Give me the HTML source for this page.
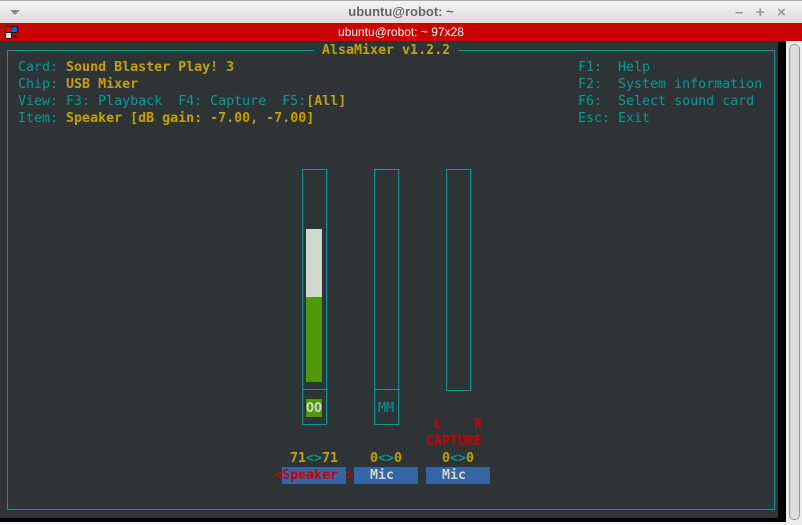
<!DOCTYPE html><html><head><style>
*{margin:0;padding:0;box-sizing:border-box}
body{width:802px;height:525px;background:#f2f2f2;position:relative;overflow:hidden;font-family:"DejaVu Sans Mono","Liberation Mono",monospace;font-size:13.3px}
.a{position:absolute;white-space:pre;line-height:17px}
.t{color:#06989a}.y{color:#c4a000;font-weight:bold}.r{color:#cc0000}
.b{position:absolute;border:1.5px solid #06989a}
</style></head><body>
<div class="a" style="left:0;top:0;width:802px;height:23px;background:linear-gradient(#f4f4f4,#dcdcdc);border-top:1px solid #aaa"></div>
<div class="a" style="left:10px;top:10px;width:0;height:0;border-left:5px solid transparent;border-right:5px solid transparent;border-top:5px solid #888"></div>
<div class="a" style="left:0;top:3px;width:802px;text-align:center;font-family:'Liberation Sans',sans-serif;font-size:13px;font-weight:bold;color:#666">ubuntu@robot: ~</div>
<div class="a" style="left:735px;top:4px;color:#999;font-family:'Liberation Sans',sans-serif;font-size:15px;font-weight:bold">–&nbsp;&nbsp;&nbsp;+&nbsp;&nbsp;&nbsp;×</div>
<div class="a" style="left:0;top:23px;width:802px;height:18px;background:#c80000"></div>
<div class="a" style="left:0;top:24px;width:802px;text-align:center;font-family:'Liberation Sans',sans-serif;font-size:12px;color:#fff;line-height:16px">ubuntu@robot: ~ 97x28</div>
<svg style="position:absolute;left:4px;top:25px" width="15" height="15"><rect x="1.5" y="1.5" width="6" height="6" fill="#e00" stroke="#111" stroke-width="1"/><rect x="7.5" y="1.5" width="6" height="6" fill="#06c" stroke="#111" stroke-width="1"/><rect x="1.5" y="7.5" width="6" height="6" fill="#ddd" stroke="#111" stroke-width="1"/><path d="M8 10h6l-3 3z" fill="#400"/></svg>
<div class="a" style="left:0;top:41px;width:786px;height:481px;background:#000"></div>
<div class="a" style="left:0;top:41px;width:778px;height:477px;background:#2e3436"></div>
<div class="a" style="left:786px;top:41px;width:16px;height:484px;background:#eee"></div>
<div class="a" style="left:789px;top:44px;width:11px;height:476px;border:1px solid #999;border-radius:5px;background:#ddd"></div>
<div class="a" style="left:7px;top:50px;width:768px;height:460px;border:1px solid #06989a"></div>
<div class="a y" style="left:314px;top:42px;background:#2e3436;padding:0 8px">AlsaMixer v1.2.2</div>
<div class="a" style="left:18px;top:59px;line-height:17px"><span class="t">Card: </span><span class="y">Sound Blaster Play! 3</span>
<span class="t">Chip: </span><span class="y">USB Mixer</span>
<span class="t">View: F3: Playback  F4: Capture  F5:</span><span class="y">[All]</span>
<span class="t">Item: </span><span class="y">Speaker [dB gain: -7.00, -7.00]</span></div>
<div class="a t" style="left:578px;top:59px">F1:  Help
F2:  System information
F6:  Select sound card
Esc: Exit</div>
<div class="b" style="left:302px;top:169px;width:25px;height:256px"></div>
<div class="b" style="left:302px;top:389px;width:25px;height:2px;border-width:1.5px 0 0 0"></div>
<div class="a" style="left:306px;top:229px;width:16px;height:68px;background:#d3d7cf"></div>
<div class="a" style="left:306px;top:297px;width:16px;height:85px;background:#4e9a06"></div>
<div class="a" style="left:306px;top:399px;width:16px;height:18px;background:#4e9a06"></div>
<div class="a" style="left:306px;top:400px;color:#d3d7cf;font-weight:bold">OO</div>
<div class="b" style="left:374px;top:169px;width:25px;height:256px"></div>
<div class="b" style="left:374px;top:389px;width:25px;height:2px;border-width:1.5px 0 0 0"></div>
<div class="a t" style="left:378px;top:400px">MM</div>
<div class="b" style="left:446px;top:169px;width:25px;height:222px"></div>
<div class="a r" style="left:434px;top:416px;font-weight:bold">L    R</div>
<div class="a r" style="left:426px;top:433px;font-weight:bold">CAPTURE</div>
<div class="a" style="left:290px;top:450px;font-weight:bold"><span style="color:#c4a000">71</span><span class="t">&lt;&gt;</span><span style="color:#c4a000">71</span></div>
<div class="a" style="left:370px;top:450px;font-weight:bold"><span style="color:#c4a000">0</span><span class="t">&lt;&gt;</span><span style="color:#c4a000">0</span></div>
<div class="a" style="left:442px;top:450px;font-weight:bold"><span style="color:#c4a000">0</span><span class="t">&lt;&gt;</span><span style="color:#c4a000">0</span></div>
<div class="a" style="left:282px;top:467px;width:64px;height:17px;background:#3465a4"></div>
<div class="a" style="left:354px;top:467px;width:64px;height:17px;background:#3465a4"></div>
<div class="a" style="left:426px;top:467px;width:64px;height:17px;background:#3465a4"></div>
<div class="a r" style="left:274px;top:467px;font-weight:bold">&lt;Speaker &gt;</div>
<div class="a" style="left:370px;top:467px;color:#d3d7cf;font-weight:bold">Mic</div>
<div class="a" style="left:442px;top:467px;color:#d3d7cf;font-weight:bold">Mic</div>
</body></html>
